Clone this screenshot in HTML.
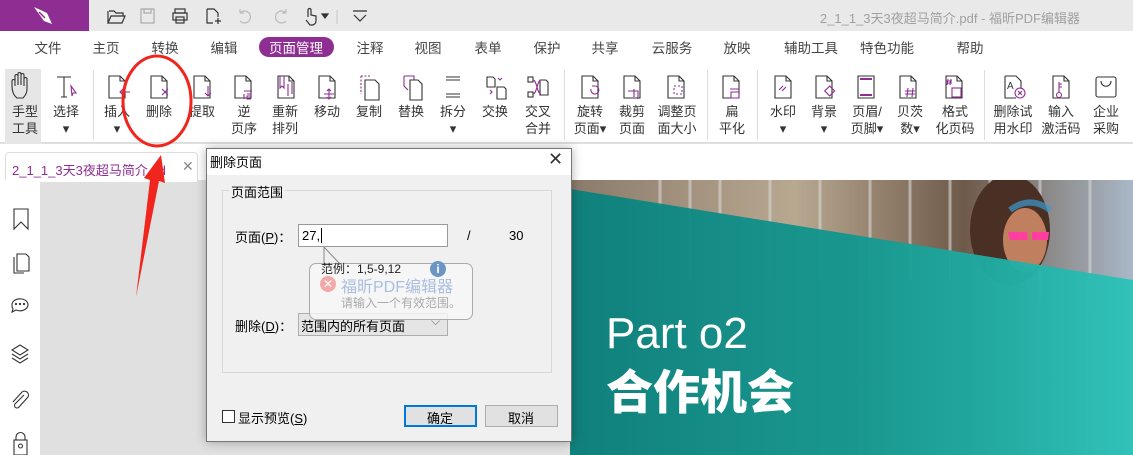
<!DOCTYPE html>
<html><head><meta charset="utf-8"><style>
*{margin:0;padding:0;box-sizing:border-box}
body{width:1133px;height:455px;overflow:hidden;position:relative;background:#e0e0e0;font-family:"Liberation Sans","Noto Sans CJK SC",sans-serif;font-size:13px;color:#333}
.abs{position:absolute}
.t{position:absolute;white-space:nowrap}
.lbl{position:absolute;text-align:center;font-size:13px;line-height:17px;color:#333;transform:translateX(-50%);white-space:nowrap}
.menu{position:absolute;top:37px;font-size:13.5px;color:#444;transform:translateX(-50%)}
</style></head><body>
<div class="abs" style="left:0;top:0;width:1133px;height:31px;background:#e9e9e9"></div>
<div class="abs" style="left:0;top:0;width:89px;height:31px;background:#8e2d92"></div>
<svg class="abs" style="left:30px;top:4px" width="28" height="24" viewBox="0 0 28 24"><path d="M4 3 L17 9 L22 20 L14 17 Z" fill="#fff"/><path d="M9 8 L15 14" stroke="#8e2d92" stroke-width="1.5"/></svg>
<svg class="abs" style="left:100px;top:4px" width="280" height="24" viewBox="0 0 280 24" fill="none" stroke="#333" stroke-width="1.2">
<path d="M9 7h5l2 2h7v3M8 19l3-7h14l-3 7H8zM8 19V7"/>
<rect x="41" y="5" width="13" height="14" stroke="#aaa"/><rect x="44" y="5" width="7" height="4" stroke="#aaa"/>
<rect x="75" y="5" width="10" height="4"/><rect x="73" y="9" width="14" height="7"/><rect x="76" y="13" width="8" height="6"/>
<path d="M107 5h7l4 4v4M107 5v14h6M115 17h6M118 14v6"/>
<path d="M140 9a6 6 0 1 1 0 8M140 9h4M140 9v-4" stroke="#bbb"/>
<path d="M186 9a6 6 0 1 0 0 8M186 9h-4M186 9v-4" stroke="#bbb"/>
<path d="M208 13V6a1.5 1.5 0 0 1 3 0v5l5 1v5a4 4 0 0 1-4 4h-2l-4-5"/><path d="M222 10h6l-3 4z" fill="#333"/>
<path d="M237 6v14" stroke="#ccc"/>
<path d="M253 7h14M254 11l6 6 6-6"/>
</svg>
<div class="t" style="right:53px;top:8px;color:#a0a0a0;font-size:13px">2_1_1_3天3夜超马简介.pdf - 福昕PDF编辑器</div>
<div class="abs" style="left:0;top:31px;width:1133px;height:112px;background:#fff;border-bottom:1px solid #ddd"></div>
<div class="menu" style="left:48px">文件</div><div class="menu" style="left:106px">主页</div><div class="menu" style="left:165px">转换</div><div class="menu" style="left:224px">编辑</div>
<div class="abs" style="left:259px;top:37px;width:75px;height:20px;border-radius:10px;background:#8e2d92"></div>
<div class="menu" style="left:296px;color:#fff">页面管理</div>
<div class="menu" style="left:370px">注释</div><div class="menu" style="left:428px">视图</div><div class="menu" style="left:488px">表单</div><div class="menu" style="left:547px">保护</div><div class="menu" style="left:605px">共享</div><div class="menu" style="left:672px">云服务</div><div class="menu" style="left:737px">放映</div><div class="menu" style="left:811px">辅助工具</div><div class="menu" style="left:887px">特色功能</div><div class="menu" style="left:970px">帮助</div>
<div class="abs" style="left:5px;top:69px;width:36px;height:82px;background:#e6e6e6"></div>
<div class="abs" style="left:93px;top:70px;width:1px;height:70px;background:#ddd"></div>
<div class="abs" style="left:564px;top:70px;width:1px;height:70px;background:#ddd"></div>
<div class="abs" style="left:707px;top:70px;width:1px;height:70px;background:#ddd"></div>
<div class="abs" style="left:757px;top:70px;width:1px;height:70px;background:#ddd"></div>
<div class="abs" style="left:984px;top:70px;width:1px;height:70px;background:#ddd"></div>
<svg class="abs" style="left:0;top:70px" width="1133" height="32" viewBox="0 70 1133 32" fill="none" stroke="#333" stroke-width="1.1">
<defs><path id="pg" d="M-8 -11h11l5 5v17h-16z M3 -11v5h5"/></defs>
<path d="M17 98c-4-3-5-8-5-12v-5a1.5 1.5 0 0 1 3 0v5v-10a1.5 1.5 0 0 1 3 0v9-11a1.5 1.5 0 0 1 3 0v11-10a1.5 1.5 0 0 1 3 0v11-7a1.5 1.5 0 0 1 3 0v10c0 4-2 7-4 9z"/>
<path d="M57 77h14M64 77v20M61 97h6"/><path d="M71 86l5 7-3 0 -1 3z" stroke="#8e2d92"/>
<use href="#pg" x="117" y="87"/><path d="M130 92h-10M123 89l-3 3 3 3" stroke="#8e2d92"/>
<use href="#pg" x="159" y="87"/><path d="M162 89l6 6M168 89l-6 6" stroke="#8e2d92"/>
<use href="#pg" x="202" y="87"/><path d="M208 86v10M205 93l3 3 3-3" stroke="#8e2d92"/>
<use href="#pg" x="243" y="87"/><path d="M244 91h8M244 94v5M247 94h4v2h-4v3h4" stroke="#8e2d92"/>
<use href="#pg" x="286" y="87"/><path d="M280 76v12l2-2 2 2V76M288 84v12M292 82v12" stroke="#8e2d92"/>
<use href="#pg" x="327" y="87"/><path d="M329 89v10M324 94h10M327 91l2-2 2 2M327 97l2 2 2-2" stroke="#8e2d92"/>
<path d="M361 76h10M361 76v18" stroke="#8e2d92" stroke-dasharray="2 1.5"/><path d="M365 80h10l4 4v16h-14z"/>
<path d="M404 76h10v4M404 76v10l4 4" stroke="#8e2d92"/><path d="M410 80h8l4 4v16h-12z"/>
<path d="M446 77h14M446 80h14M446 94h14M446 97h14"/>
<path d="M487 77h6l2 2v8h-8z M497 87h7l2 2v10h-9z"/><path d="M498 78l2 2 2-2M490 90l2 2-2 2" stroke="#8e2d92"/>
<rect x="528" y="77" width="5" height="5"/><rect x="528" y="92" width="5" height="5"/><path d="M540 80h6l2 2v13h-8z"/><path d="M533 80c4 0 4 14 8 14M533 94c4 0 4-14 8-14" stroke="#8e2d92"/>
<use href="#pg" x="590" y="87"/><path d="M591 89a4 4 0 1 0 4-3h-3" stroke="#8e2d92"/>
<use href="#pg" x="632" y="87"/><path d="M628 91h10v8M634 89v8" stroke="#8e2d92"/>
<use href="#pg" x="676" y="87"/><rect x="674" y="86" width="8" height="8" stroke="#8e2d92" stroke-dasharray="2 2"/>
<use href="#pg" x="731" y="87"/><path d="M730 89h9M731 92h8v6h-8z" stroke="#8e2d92"/>
<use href="#pg" x="783" y="87"/><path d="M779 90l4-4M782 91l4-4" stroke="#8e2d92"/>
<use href="#pg" x="824" y="87"/><rect x="826" y="87" width="7" height="7" transform="rotate(45 829 91)" stroke="#8e2d92"/>
<path d="M858 76h16v22h-16z"/><path d="M860 79h12M860 95h12" stroke="#8e2d92" stroke-width="2"/>
<use href="#pg" x="908" y="87"/><path d="M908 88l-1 9M913 88l-1 9M905 91h10M905 94h10" stroke="#8e2d92"/>
<use href="#pg" x="954" y="87"/><path d="M948 79l-1 6M951 79l-1 6M946 81h6M946 83h6" stroke="#8e2d92"/><rect x="952" y="88" width="9" height="9" stroke="#8e2d92"/>
<path d="M1005 76h11l5 5v8M1005 76v22h11"/><text x="1007" y="89" font-size="10" fill="#333" stroke="none">A</text><circle cx="1020" cy="93" r="5" stroke="#8e2d92"/><path d="M1018 91l4 4M1022 91l-4 4" stroke="#8e2d92"/>
<use href="#pg" x="1061" y="87"/><circle cx="1059" cy="95" r="2.5" stroke="#8e2d92"/><path d="M1059 92v-10M1059 84h3M1059 87h3" stroke="#8e2d92"/>
<rect x="1096" y="77" width="20" height="20" rx="2"/><path d="M1101 81c0 7 10 7 10 0"/>
</svg>
<div class="lbl" style="left:25px;top:103px">手型<br>工具</div>
<div class="lbl" style="left:66px;top:103px">选择<br>▾</div>
<div class="lbl" style="left:117px;top:103px">插入<br>▾</div>
<div class="lbl" style="left:159px;top:103px">删除</div>
<div class="lbl" style="left:202px;top:103px">提取</div>
<div class="lbl" style="left:244px;top:103px">逆<br>页序</div>
<div class="lbl" style="left:285px;top:103px">重新<br>排列</div>
<div class="lbl" style="left:327px;top:103px">移动</div>
<div class="lbl" style="left:369px;top:103px">复制</div>
<div class="lbl" style="left:411px;top:103px">替换</div>
<div class="lbl" style="left:453px;top:103px">拆分<br>▾</div>
<div class="lbl" style="left:495px;top:103px">交换</div>
<div class="lbl" style="left:538px;top:103px">交叉<br>合并</div>
<div class="lbl" style="left:590px;top:103px">旋转<br>页面▾</div>
<div class="lbl" style="left:632px;top:103px">裁剪<br>页面</div>
<div class="lbl" style="left:677px;top:103px">调整页<br>面大小</div>
<div class="lbl" style="left:732px;top:103px">扁<br>平化</div>
<div class="lbl" style="left:783px;top:103px">水印<br>▾</div>
<div class="lbl" style="left:824px;top:103px">背景<br>▾</div>
<div class="lbl" style="left:867px;top:103px">页眉/<br>页脚▾</div>
<div class="lbl" style="left:910px;top:103px">贝茨<br>数▾</div>
<div class="lbl" style="left:955px;top:103px">格式<br>化页码</div>
<div class="lbl" style="left:1013px;top:103px">删除试<br>用水印</div>
<div class="lbl" style="left:1061px;top:103px">输入<br>激活码</div>
<div class="lbl" style="left:1106px;top:103px">企业<br>采购</div>
<div class="abs" style="left:0;top:144px;width:570px;height:36px;background:#fff"></div>
<div class="abs" style="left:5px;top:152px;width:193px;height:30px;background:#fff;border:1px solid #ddd;border-bottom:none;border-radius:4px 4px 0 0"></div>
<div class="t" style="left:12px;top:160px;color:#8e2d92;font-size:13px">2_1_1_3天3夜超马简介.pd</div>
<div class="t" style="left:182px;top:158px;color:#888;font-size:14px">✕</div>
<div class="abs" style="left:0;top:180px;width:40px;height:275px;background:#fff"></div>
<svg class="abs" style="left:0;top:180px" width="40" height="275" viewBox="0 180 40 275" fill="none" stroke="#333" stroke-width="1.1">
<path d="M14 209h14v20l-7-7-7 7z"/>
<path d="M17 254h9l3 3v14h-12z M14 257v16h10"/>
<path d="M12 305a8 6 0 1 1 4 5l-4 2 1-3a6 6 0 0 1-1-4z"/><circle cx="16" cy="304" r=".6" fill="#333"/><circle cx="20" cy="304" r=".6" fill="#333"/><circle cx="24" cy="304" r=".6" fill="#333"/>
<path d="M20 345l-8 5 8 5 8-5z M12 354l8 5 8-5 M12 358l8 5 8-5"/>
<path d="M24 395l-9 9a2.5 2.5 0 0 0 4 3l9-10a4 4 0 0 0-6-5l-9 10"/>
<rect x="14" y="440" width="13" height="15"/><path d="M16 440v-3a4 4 0 0 1 9 0v3"/><circle cx="20.5" cy="446" r="2"/>
</svg>
<div class="abs" style="left:570px;top:144px;width:563px;height:36px;background:#fff"></div>
<svg class="abs" style="left:570px;top:180px" width="563" height="275" viewBox="0 0 563 275">
<defs><linearGradient id="ph" x1="0" y1="0" x2="1" y2="0"><stop offset="0" stop-color="#8a7a6a"/><stop offset=".4" stop-color="#b8a890"/><stop offset=".7" stop-color="#6f5a4a"/><stop offset="1" stop-color="#a9b8c8"/></linearGradient>
<linearGradient id="tl" x1="0" y1="0" x2="1" y2="0"><stop offset="0" stop-color="#0b807c"/><stop offset=".5" stop-color="#13978f"/><stop offset="1" stop-color="#2cc2b8"/></linearGradient></defs>
<rect width="563" height="275" fill="url(#ph)"/>
<g stroke="#d8d8d8" stroke-width="3" opacity=".6"><path d="M90 0v100M120 0v100M150 0v100M200 0v100M250 0v100M300 0v100M340 0v100M380 0v100M420 0v100M470 0v120M520 0v130"/></g>
<ellipse cx="440" cy="50" rx="40" ry="55" fill="#4a3024"/><ellipse cx="455" cy="60" rx="22" ry="32" fill="#c08060"/>
<path d="M438 52h19l1 8h-18zM462 52h17l-1 8h-16z" fill="#ff3ea0"/>
<path d="M440 30q20-15 40 0" stroke="#3a9ad0" stroke-width="6" fill="none" opacity=".7"/>
<polygon points="0,9 563,100 563,275 0,275" fill="url(#tl)" opacity=".96"/>
<text x="36" y="168" font-family="Liberation Sans,sans-serif" font-size="44" font-weight="300" fill="#fff">Part o2</text>
<text x="36" y="229" font-family="Liberation Sans,Noto Sans CJK SC,sans-serif" font-size="47" font-weight="900" fill="#fff">合作机会</text>
</svg>
<svg class="abs" style="left:0;top:0" width="300" height="320">
<ellipse cx="157" cy="101" rx="34" ry="45" fill="none" stroke="#f0261e" stroke-width="3"/>
<path d="M136 297L150 180l-6-2 17-23 4 28-6-2z" fill="#f0261e"/>
</svg>
<div class="abs" style="left:206px;top:148px;width:366px;height:294px;background:#f0f0f0;border:1px solid #777;box-shadow:0 0 10px rgba(0,0,0,.3)"></div>
<div class="abs" style="left:207px;top:149px;width:364px;height:26px;background:#fff"></div>
<div class="t" style="left:210px;top:152px;font-size:13px;color:#000">删除页面</div>
<div class="t" style="left:548px;top:149px;font-size:18px;color:#333">✕</div>
<div class="abs" style="left:222px;top:190px;width:330px;height:183px;border:1px solid #d8d8d8"></div>
<div class="t" style="left:229px;top:182px;background:#f0f0f0;padding:0 2px;font-size:13px;color:#000">页面范围</div>
<div class="t" style="left:235px;top:227px;font-size:13px;color:#000">页面(<u>P</u>)：</div>
<div class="abs" style="left:298px;top:224px;width:150px;height:23px;background:#fff;border:1px solid #999"></div>
<div class="t" style="left:302px;top:228px;font-size:13px;color:#000">27,<span style="border-left:1px solid #000;margin-left:1px"> </span></div>
<div class="t" style="left:467px;top:228px;font-size:13px;color:#000">/</div>
<div class="t" style="left:509px;top:228px;font-size:13px;color:#000">30</div>
<div class="t" style="left:235px;top:316px;font-size:13px;color:#000">删除(<u>D</u>)：</div>
<div class="abs" style="left:298px;top:313px;width:150px;height:23px;background:#e5e5e5;border:1px solid #adadad"></div>
<div class="t" style="left:301px;top:316px;font-size:13px;color:#000">范围内的所有页面</div>
<div class="t" style="left:431px;top:314px;font-size:12px;color:#777">⌵</div>
<div class="abs" style="left:309px;top:263px;width:164px;height:57px;border:1px solid #aaa;border-radius:7px;background:rgba(248,248,248,.8)"></div>
<svg class="abs" style="left:322px;top:247px" width="30" height="20"><path d="M2 0v18M2 0l16 17" stroke="#888" fill="none"/></svg>
<div class="t" style="left:321px;top:260px;font-size:12px;color:#222">范例：1,5-9,12</div>
<div class="abs" style="left:430px;top:261px;width:16px;height:16px;border-radius:50%;background:#6a95c4;color:#fff;font-size:12px;font-weight:bold;text-align:center;line-height:16px">i</div>
<div class="abs" style="left:320px;top:276px;width:16px;height:16px;border-radius:50%;background:#f3a9a9;color:#fff;font-size:12px;text-align:center;line-height:16px">✕</div>
<div class="t" style="left:341px;top:273px;font-size:16px;color:#a9bfe0">福昕PDF编辑器</div>
<div class="t" style="left:341px;top:294px;font-size:12px;color:#aaa">请输入一个有效范围。</div>
<div class="abs" style="left:222px;top:410px;width:13px;height:13px;background:#fff;border:1px solid #333"></div>
<div class="t" style="left:238px;top:408px;font-size:13px;color:#000">显示预览(<u>S</u>)</div>
<div class="abs" style="left:404px;top:405px;width:73px;height:22px;background:#e1e1e1;border:2px solid #0078d7"></div>
<div class="t" style="left:427px;top:408px;font-size:13px;color:#000">确定</div>
<div class="abs" style="left:485px;top:405px;width:73px;height:22px;background:#e1e1e1;border:1px solid #adadad"></div>
<div class="t" style="left:508px;top:408px;font-size:13px;color:#000">取消</div>
</body></html>
